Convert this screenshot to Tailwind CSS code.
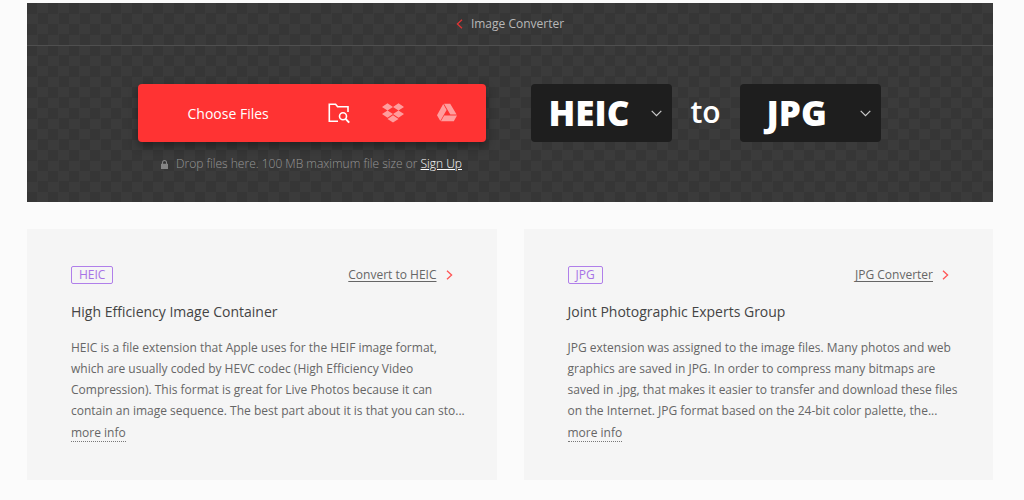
<!DOCTYPE html>
<html lang="en">
  <head>
    <meta charset="UTF-8" />
    <meta name="viewport" content="width=device-width, initial-scale=1.0" />
    <title>HEIC to JPG Converter</title>
    <script src="https://cdn.jsdelivr.net/npm/@tailwindcss/browser@4"></script>
  </head>
  <body class="min-h-screen bg-[#fbfbfb] pt-[3px] pr-[31px] pb-5 pl-[27px] font-['Open_Sans',sans-serif] text-[#666]">
    <!-- Converter -->
    <header class="bg-[#383838] bg-[repeating-conic-gradient(#3b3b3b_0_25%,#363636_0_50%)] bg-size-[21px_21px]">
      <nav class="flex h-[43px] items-center justify-center border-b border-[#4f4f4f]">
        <a href="#" class="flex items-center gap-2 text-[12px] text-[#b8b8b8]">
          <svg class="h-[10px] w-[7px]" viewBox="0 0 7 10" fill="none" stroke="#e03434" stroke-width="1.3"><path d="M6 .7 1.4 5 6 9.3" /></svg>
          Image Converter
        </a>
      </nav>

      <div class="flex items-start justify-center pt-[38px] pr-[18px] pb-7 pl-4">
        <div class="w-[348px]">
          <div class="flex h-[58px] items-center rounded bg-[#ff3333] pr-7 pl-[50px] text-white shadow-[0_4px_10px_rgba(0,0,0,0.4)]">
            <button type="button" class="mr-auto text-[14px]">Choose Files</button>
            <button type="button" aria-label="From computer" class="mr-8">
              <svg class="h-[22px] w-[22px]" viewBox="0 0 22 22" fill="none" stroke="currentColor" stroke-width="1.6">
                <path d="M10 19.2H1.3V2.3H7.6L9.6 4.7H20V10" />
                <circle cx="15" cy="14.3" r="3.5" />
                <path d="M17.6 16.9 21.2 20.6" stroke-width="2" />
              </svg>
            </button>
            <button type="button" aria-label="From Dropbox" class="mr-8 text-[#ff9d9d]">
              <svg class="h-[22px] w-[22px]" viewBox="0 0 22 22" fill="currentColor">
                <path d="M5.5 1.3 11 4.9 5.5 8.5 0 4.9ZM16.5 1.3 22 4.9 16.5 8.5 11 4.9ZM5.5 8.5 11 12.1 5.5 15.7 0 12.1ZM16.5 8.5 22 12.1 16.5 15.7 11 12.1ZM11 13.3 16.5 16.9 11 20.5 5.5 16.9Z" />
              </svg>
            </button>
            <button type="button" aria-label="From Google Drive" class="text-[#ff9d9d]">
              <svg class="h-[22px] w-[22px]" viewBox="0 0 22 22" fill="currentColor">
                <path d="M7.2 2 10.6 7.9 4.3 19 1 13.2ZM8 1.8H14.2L20.6 12.6H14.3ZM8.2 13.4H21L17.8 19.2H4.9Z" />
              </svg>
            </button>
          </div>
          <p class="mt-3 flex items-center justify-center text-[12px] leading-5 font-light text-[#969696]">
            <svg class="mr-2 h-[9px] w-[7px]" viewBox="0 0 7 9" fill="#858585"><path d="M0 3.8H1V2.5a2.5 2.5 0 0 1 5 0V3.8H7V9H0ZM2 3.8H5V2.5a1.5 1.5 0 0 0-3 0Z" /></svg>
            <span>Drop files here. 100 MB maximum file size or <a href="#" class="text-white underline">Sign Up</a></span>
          </p>
        </div>

        <div class="relative ml-[45px]">
          <select aria-label="Convert from" class="block h-[58px] w-[141px] appearance-none rounded bg-[#1e1e1e] indent-[18px] text-[35px] leading-[58px] font-extrabold text-white">
            <option>HEIC</option>
          </select>
          <svg class="pointer-events-none absolute top-[26px] right-[10px] h-[7px] w-[11px]" viewBox="0 0 11 7" fill="none" stroke="#ccc" stroke-width="1.2"><path d="M.7 .8 5.5 5.6 10.3 .8" /></svg>
        </div>
        <span class="w-[68px] text-center text-[30px] leading-[56px] font-semibold text-white">to</span>
        <div class="relative">
          <select aria-label="Convert to" class="block h-[58px] w-[141px] appearance-none rounded bg-[#1e1e1e] indent-[27px] text-[35px] leading-[58px] font-extrabold text-white">
            <option>JPG</option>
          </select>
          <svg class="pointer-events-none absolute top-[26px] right-[10px] h-[7px] w-[11px]" viewBox="0 0 11 7" fill="none" stroke="#ccc" stroke-width="1.2"><path d="M.7 .8 5.5 5.6 10.3 .8" /></svg>
        </div>
      </div>
    </header>

    <!-- Format descriptions -->
    <main class="mt-[27px] grid grid-cols-2 gap-[27px]">
      <section class="bg-[#f5f5f5] px-11 pt-9 pb-[38px]">
        <div class="flex items-center justify-between">
          <span class="rounded-xs border border-[#b07fea] px-[7px] text-[12px] leading-4 text-[#a772e6]">HEIC</span>
          <a href="#" class="flex items-center gap-[9px] text-[12px] leading-5">
            <span class="underline underline-offset-2">Convert to HEIC</span>
            <svg class="h-[10px] w-[7px]" viewBox="0 0 7 10" fill="none" stroke="#ff5555" stroke-width="1.3"><path d="M1 .7 5.6 5 1 9.3" /></svg>
          </a>
        </div>
        <h2 class="mt-4 text-[14px] leading-[22px] text-[#444]">High Efficiency Image Container</h2>
        <p class="mt-3.5 -mr-4 text-[12px] leading-[21px]">
          HEIC is a file extension that Apple uses for the HEIF image format, which are usually coded by HEVC codec (High Efficiency Video Compression). This format is great for Live Photos because it can contain an image sequence. The best part about it is that you can sto...
        </p>
        <a href="#" class="mt-1 block w-fit border-b border-dotted border-[#777] text-[12px] leading-4">more info</a>
      </section>

      <section class="bg-[#f5f5f5] px-11 pt-9 pb-[38px]">
        <div class="flex items-center justify-between">
          <span class="rounded-xs border border-[#b07fea] px-[7px] text-[12px] leading-4 text-[#a772e6]">JPG</span>
          <a href="#" class="flex items-center gap-[9px] text-[12px] leading-5">
            <span class="underline underline-offset-2">JPG Converter</span>
            <svg class="h-[10px] w-[7px]" viewBox="0 0 7 10" fill="none" stroke="#ff5555" stroke-width="1.3"><path d="M1 .7 5.6 5 1 9.3" /></svg>
          </a>
        </div>
        <h2 class="mt-4 text-[14px] leading-[22px] text-[#444]">Joint Photographic Experts Group</h2>
        <p class="mt-3.5 -mr-4 text-[12px] leading-[21px]">
          JPG extension was assigned to the image files. Many photos and web graphics are saved in JPG. In order to compress many bitmaps are saved in .jpg, that makes it easier to transfer and download these files on the Internet. JPG format based on the 24-bit color palette, the...
        </p>
        <a href="#" class="mt-1 block w-fit border-b border-dotted border-[#777] text-[12px] leading-4">more info</a>
      </section>
    </main>
  </body>
</html>
